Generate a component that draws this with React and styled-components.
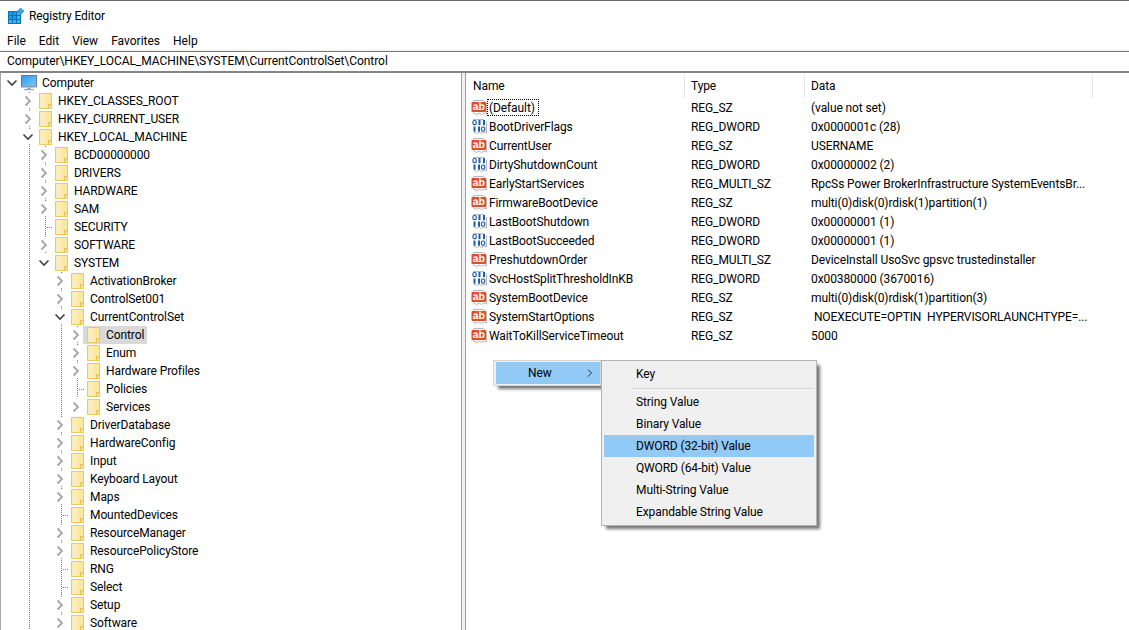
import React from "react";
import styled, { createGlobalStyle } from "styled-components";

const Global = createGlobalStyle`
  html, body { margin: 0; padding: 0; background: #fff; }
  body { font-family: Roboto, "Noto Sans", sans-serif; font-size: 12px; letter-spacing: -0.1px; color: #000; }
`;

const Window = styled.div`
  width: 1129px; height: 630px; overflow: hidden; display: flex; flex-direction: column;
  border-top: 1px solid #6b6b6b; box-sizing: border-box; background: #fff;
`;
const TitleBar = styled.div`
  height: 30px; flex: none; display: flex; align-items: center; padding: 0 0 0 8px; box-sizing: border-box; gap: 5px;
`;
const TitleText = styled.span`line-height: 16px;`;
const MenuBar = styled.div`
  height: 20px; flex: none; display: flex; align-items: center; padding-left: 7px;
  gap: 13px; box-sizing: border-box; letter-spacing: 0;
`;
const MenuItem = styled.span`line-height: 16px;`;
const AddressBar = styled.div`
  height: 20px; flex: none; box-sizing: border-box; border-top: 1px solid #767676;
  display: flex; align-items: center; padding: 0 0 1px 7px; line-height: 16px; white-space: pre;
  box-shadow: 0 -1px 0 #f0f0f0; letter-spacing: -0.05px;
`;
const Panes = styled.div`
  flex: 1; min-height: 0; display: flex; border-top: 2px solid #858585;
`;
const TreePane = styled.div`
  width: 461px; flex: none; box-sizing: border-box; border-left: 1px solid #a8a8a8;
  padding-top: 1px; overflow: hidden;
`;
const Splitter = styled.div`
  width: 5px; flex: none; box-sizing: border-box; background: #f0f0f0;
  border-left: 1px solid #a0a0a0; border-right: 1px solid #a0a0a0;
`;
const TreeRow = styled.div`height: 18px; display: flex; align-items: stretch; padding-left: 3px;`;
const Guide = styled.div`
  width: 16px; flex: none; position: relative;
  ${(p) => p.$line && `background: repeating-linear-gradient(to bottom, #7d7d7d 0 1px, transparent 1px 2px) 9px 0 / 1px 100% no-repeat;`}
`;
const Stub = styled.div`
  position: absolute; left: 11px; top: 9px; width: 5px; height: 1px;
  background: repeating-linear-gradient(to right, #7d7d7d 0 1px, transparent 1px 2px);
`;
const ChevronBox = styled.svg`
  position: absolute; left: 1px; top: 2px; width: 14px; height: 14px; background: #fff; display: block;
`;
const Node = styled.div`
  display: flex; align-items: center; gap: 6px; margin-left: -1px; padding: 0 3px 0 4px;
  background: ${(p) => (p.$selected ? "#d9d9d9" : "transparent")}; white-space: nowrap; line-height: 16px;
`;
const ComputerNode = styled(Node)`gap: 5px; padding-left: 2px;`;

const ListPane = styled.div`flex: 1; min-width: 0; position: relative; padding-top: 1px;`;
const HeaderRow = styled.div`height: 24px; display: flex;`;
const HeaderCell = styled.div`
  width: ${(p) => p.$w}px; flex: none; box-sizing: border-box; padding-left: ${(p) => p.$pad}px;
  border-right: 1px solid #e5e5e5; line-height: 24px;
`;
const ValueRow = styled.div`height: 19px; display: flex; align-items: center;`;
const NameCell = styled.div`
  width: 219px; flex: none; padding-left: 5px; box-sizing: border-box; display: flex; align-items: center; gap: 1px;
`;
const TypeCell = styled.div`width: 120px; flex: none; padding-left: 6px; box-sizing: border-box; line-height: 16px;`;
const DataCell = styled.div`padding-left: 6px; white-space: pre; line-height: 16px;`;
const NameText = styled.span`
  line-height: 16px; padding: 1px 4px 0 2px; margin-left: -2px; white-space: nowrap;
  outline: ${(p) => (p.$focus ? "1px dotted #000" : "none")};
  outline-offset: -1px;
`;

const ContextMenu = styled.div`
  position: absolute; left: 27px; top: 287px; display: flex; align-items: flex-start;
`;
const ParentMenu = styled.div`
  width: 108px; height: 26px; box-sizing: border-box; background: #f0f0f0; border: 1px solid #d4d4d4;
  padding: 1px 0 1px 2px; box-shadow: 4px 4px 3px -1px rgba(0,0,0,.55);
`;
const ParentItem = styled.div`
  height: 22px; background: #91c9f7; display: flex; align-items: center; justify-content: space-between;
  padding: 0 7px 0 32px; line-height: 16px;
`;
const SubMenu = styled.div`
  width: 216px; height: 166px; box-sizing: border-box; background: #f0f0f0; border: 1px solid #b4b4b4;
  padding: 2px; box-shadow: 4px 4px 3px -1px rgba(0,0,0,.55); position: relative;
`;
const SubItem = styled.div`
  height: 22px; display: flex; align-items: center; padding-left: 32px; line-height: 16px; white-space: nowrap;
  background: ${(p) => (p.$active ? "#91c9f7" : "transparent")};
`;
const Separator = styled.div`height: 1px; background: #d7d7d7; margin: 3px 0 2px 28px;`;

const Chevron = ({ open }) => (
  <ChevronBox viewBox="0 0 14 14">
    {open
      ? <path d="M2.5 4.5 L7 9 L11.5 4.5" fill="none" stroke="#404040" strokeWidth="1.6" />
      : <path d="M4.5 2.5 L9 7 L4.5 11.5" fill="none" stroke="#a6a6a6" strokeWidth="1.8" />}
  </ChevronBox>
);

const Folder = () => (
  <svg width="13" height="16" viewBox="0 0 13 16" style={{ flex: "none" }}>
    <rect x=".5" y=".5" width="12" height="15" fill="#fce7a1" stroke="#edc964" />
    <rect x="1" y="1" width="6" height="14" fill="#fdeeb9" />
    <path d="M9.5 15.5 V11.5 H12.5" fill="#f8d97e" stroke="#e6c056" />
  </svg>
);

const Computer = () => (
  <svg width="16" height="16" viewBox="0 0 16 16" style={{ flex: "none" }}>
    <defs>
      <linearGradient id="scr" x1="0" y1="0" x2="1" y2="1">
        <stop offset="0" stopColor="#2f9bee" />
        <stop offset="1" stopColor="#7cc8f8" />
      </linearGradient>
    </defs>
    <rect x=".5" y=".5" width="15" height="11" fill="url(#scr)" stroke="#5d7d99" />
    <rect x="0" y="11" width="16" height="1.5" fill="#8b98a5" />
    <rect x="6" y="12.5" width="4" height="1.5" fill="#a9b1b8" />
    <rect x="3" y="14" width="10" height="1.2" fill="#a0a8ae" />
  </svg>
);

const RegLogo = () => (
  <svg width="16" height="16" viewBox="0 0 16 16" style={{ flex: "none" }}>
    <rect x="0" y="3" width="13" height="13" fill="#0a74b8" />
    {[0, 1, 2].map((r) => [0, 1, 2].map((c) => (
      <rect key={`${r}${c}`} x={1 + c * 4} y={4 + r * 4} width="3" height="3"
        fill={r === 2 || c === 2 ? "#41b6ee" : "#1a9be0"} />
    )))}
    <path d="M12.5 0 L16 3.2 L12.5 6.4 L9.5 3.2 Z" fill="#3fa9e0" stroke="#0a74b8" strokeWidth=".6" />
  </svg>
);

const Page = () => (
  <path d="M2.5 1.5 H12.5 L15.5 4 V15 L13 14 L10.5 15.5 L8 14 L5.5 15.5 L2.5 14 Z" fill="#fff" stroke="#b8b8b8" />
);

const StringIcon = () => (
  <svg width="17" height="17" viewBox="0 0 17 17" style={{ flex: "none" }}>
    <Page />
    <rect x="0.5" y="3" width="14.5" height="10" rx="1" fill="#dc4f28" />
    <text x="7.7" y="11.3" textAnchor="middle" fontFamily="Liberation Sans, sans-serif" fontWeight="700" fontSize="10.5" fill="#fff" style={{ textRendering: "geometricPrecision" }}>ab</text>
  </svg>
);

const Bit = ({ x, y, zero }) =>
  zero
    ? <rect x={x + 0.5} y={y + 0.5} width="3.2" height="4.2" rx="1.2" fill="none" stroke="#1f5dab" strokeWidth="1.2" />
    : <rect x={x + 1} y={y} width="2" height="5.2" fill="#1f5dab" />;

const DwordIcon = () => (
  <svg width="17" height="17" viewBox="0 0 17 17" style={{ flex: "none" }}>
    <Page />
    <rect x="1" y="2" width="14" height="12" fill="#fff" />
    <Bit x={1.5} y={2} zero /><Bit x={6.5} y={2} /><Bit x={11} y={2} />
    <Bit x={1.5} y={8.5} /><Bit x={6} y={8.5} /><Bit x={10} y={8.5} zero />
  </svg>
);

const tree = [
  [1, "c", "HKEY_CLASSES_ROOT"], [1, "c", "HKEY_CURRENT_USER"], [1, "o", "HKEY_LOCAL_MACHINE"],
  [2, "c", "BCD00000000"], [2, "c", "DRIVERS"], [2, "c", "HARDWARE"], [2, "c", "SAM"], [2, "l", "SECURITY"],
  [2, "c", "SOFTWARE"], [2, "o", "SYSTEM"],
  [3, "c", "ActivationBroker"], [3, "c", "ControlSet001"], [3, "o", "CurrentControlSet"],
  [4, "c", "Control", true], [4, "c", "Enum"], [4, "c", "Hardware Profiles"], [4, "l", "Policies"], [4, "c", "Services"],
  [3, "c", "DriverDatabase"], [3, "c", "HardwareConfig"], [3, "c", "Input"], [3, "c", "Keyboard Layout"], [3, "c", "Maps"],
  [3, "l", "MountedDevices"], [3, "c", "ResourceManager"], [3, "c", "ResourcePolicyStore"], [3, "l", "RNG"], [3, "l", "Select"],
  [3, "c", "Setup"], [3, "c", "Software"],
];

const continuesPast = (i, level) => {
  for (let j = i + 1; j < tree.length; j++) {
    if (tree[j][0] < level) return false;
    if (tree[j][0] === level) return true;
  }
  return level === 1 || level === 3;
};

const values = [
  ["s", "(Default)", "REG_SZ", "(value not set)", true],
  ["d", "BootDriverFlags", "REG_DWORD", "0x0000001c (28)"],
  ["s", "CurrentUser", "REG_SZ", "USERNAME"],
  ["d", "DirtyShutdownCount", "REG_DWORD", "0x00000002 (2)"],
  ["s", "EarlyStartServices", "REG_MULTI_SZ", "RpcSs Power BrokerInfrastructure SystemEventsBr..."],
  ["s", "FirmwareBootDevice", "REG_SZ", "multi(0)disk(0)rdisk(1)partition(1)"],
  ["d", "LastBootShutdown", "REG_DWORD", "0x00000001 (1)"],
  ["d", "LastBootSucceeded", "REG_DWORD", "0x00000001 (1)"],
  ["s", "PreshutdownOrder", "REG_MULTI_SZ", "DeviceInstall UsoSvc gpsvc trustedinstaller"],
  ["d", "SvcHostSplitThresholdInKB", "REG_DWORD", "0x00380000 (3670016)"],
  ["s", "SystemBootDevice", "REG_SZ", "multi(0)disk(0)rdisk(1)partition(3)"],
  ["s", "SystemStartOptions", "REG_SZ", " NOEXECUTE=OPTIN  HYPERVISORLAUNCHTYPE=..."],
  ["s", "WaitToKillServiceTimeout", "REG_SZ", "5000"],
];

export default function App() {
  return (
    <Window>
      <Global />
      <TitleBar><RegLogo /><TitleText>Registry Editor</TitleText></TitleBar>
      <MenuBar>
        {["File", "Edit", "View", "Favorites", "Help"].map((m) => <MenuItem key={m}>{m}</MenuItem>)}
      </MenuBar>
      <AddressBar>Computer\HKEY_LOCAL_MACHINE\SYSTEM\CurrentControlSet\Control</AddressBar>
      <Panes>
        <TreePane>
          <TreeRow>
            <Guide><Chevron open /></Guide>
            <ComputerNode><Computer />Computer</ComputerNode>
          </TreeRow>
          {tree.map(([level, state, name, selected], i) => (
            <TreeRow key={name + i}>
              <Guide />
              {Array.from({ length: level - 1 }, (_, c) => (
                <Guide key={c} $line={continuesPast(i, c + 1)} />
              ))}
              <Guide $line={state === "l" || continuesPast(i, level)}>
                {state === "l" ? <Stub /> : <Chevron open={state === "o"} />}
              </Guide>
              <Node $selected={selected}><Folder />{name}</Node>
            </TreeRow>
          ))}
        </TreePane>
        <Splitter />
        <ListPane>
          <HeaderRow>
            <HeaderCell $w={219} $pad={7}>Name</HeaderCell>
            <HeaderCell $w={120} $pad={6}>Type</HeaderCell>
            <HeaderCell $w={288} $pad={6}>Data</HeaderCell>
          </HeaderRow>
          {values.map(([kind, name, type, data, focus]) => (
            <ValueRow key={name}>
              <NameCell>
                {kind === "s" ? <StringIcon /> : <DwordIcon />}
                <NameText $focus={focus}>{name}</NameText>
              </NameCell>
              <TypeCell>{type}</TypeCell>
              <DataCell>{data}</DataCell>
            </ValueRow>
          ))}
          <ContextMenu>
            <ParentMenu>
              <ParentItem>
                New
                <svg width="6" height="8" viewBox="0 0 6 8"><path d="M1 .5 L4.5 4 L1 7.5" fill="none" stroke="#333" strokeWidth="1" /></svg>
              </ParentItem>
            </ParentMenu>
            <SubMenu>
              <SubItem>Key</SubItem>
              <Separator />
              <SubItem>String Value</SubItem>
              <SubItem>Binary Value</SubItem>
              <SubItem $active>DWORD (32-bit) Value</SubItem>
              <SubItem>QWORD (64-bit) Value</SubItem>
              <SubItem>Multi-String Value</SubItem>
              <SubItem>Expandable String Value</SubItem>
            </SubMenu>
          </ContextMenu>
        </ListPane>
      </Panes>
    </Window>
  );
}
